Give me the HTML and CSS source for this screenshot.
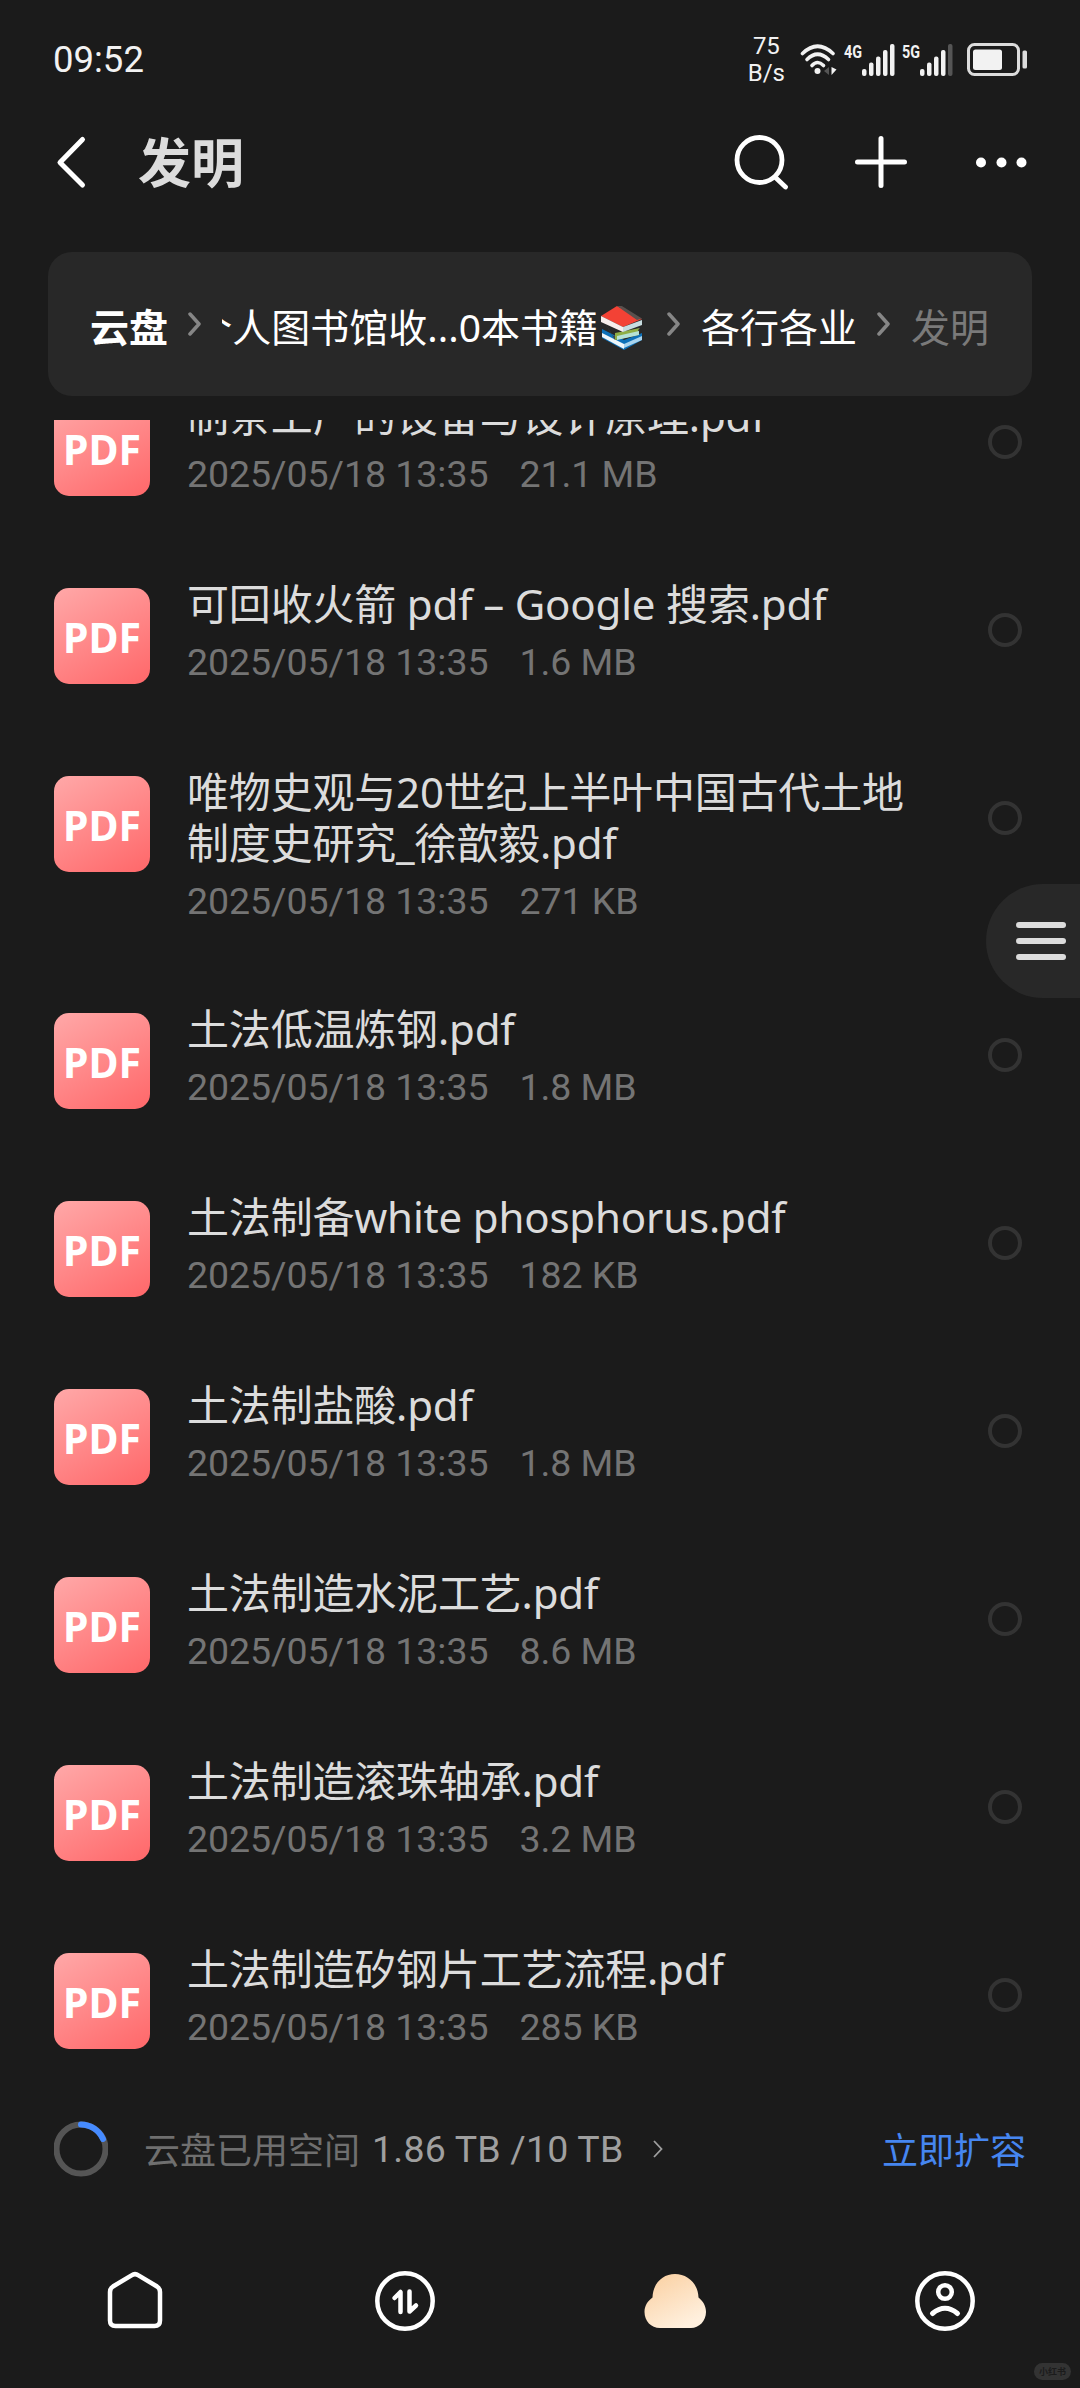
FILE: index.html
```html
<!DOCTYPE html>
<html lang="zh-CN">
<head>
    <meta charset="UTF-8">
    <title>发明</title>
    <link rel="stylesheet" href="styles.css">
</head>
<body>
    <div class="status-bar">
        <span class="time">09:52</span>
        <div class="status-right">
            <div class="speed">75<br>B/s</div>
            <svg class="wifi" width="39" height="34" viewBox="0 0 39 34" fill="none" stroke="#f2f2f2" stroke-width="3.6" stroke-linecap="round">
                <path d="M2.5 10.5 Q17.5 -4 33 10.5"/>
                <path d="M7 16.5 Q17.5 6 28.5 16.5"/>
                <path d="M12 22.5 Q17.5 16.5 23.5 22.5"/>
                <circle cx="17.5" cy="28" r="3" fill="#f2f2f2" stroke="none"/>
                <path d="M29 24v8l-5-4z" fill="#555" stroke="none"/>
                <path d="M31.5 24v8l5-5.5z" fill="#f2f2f2" stroke="none"/>
            </svg>
            <svg class="net" width="19" height="16" viewBox="0 0 19 16"><text x="0" y="15" textLength="18" lengthAdjust="spacingAndGlyphs">4G</text></svg>
            <svg class="signal" width="34" height="32" viewBox="0 0 34 32" fill="#f2f2f2">
                <rect x="0" y="25" width="4.5" height="7" rx="2"/>
                <rect x="7" y="18.5" width="4.5" height="13.5" rx="2"/>
                <rect x="14" y="12.5" width="4.5" height="19.5" rx="2"/>
                <rect x="21" y="6" width="4.5" height="26" rx="2"/>
                <rect x="28" y="0" width="4.5" height="32" rx="2"/>
            </svg>
            <svg class="net" width="19" height="16" viewBox="0 0 19 16"><text x="0" y="15" textLength="18" lengthAdjust="spacingAndGlyphs">5G</text></svg>
            <svg class="signal" width="34" height="32" viewBox="0 0 34 32" fill="#f2f2f2">
                <rect x="0" y="25" width="4.5" height="7" rx="2"/>
                <rect x="7" y="18.5" width="4.5" height="13.5" rx="2"/>
                <rect x="14" y="12.5" width="4.5" height="19.5" rx="2"/>
                <rect x="21" y="6" width="4.5" height="26" rx="2"/>
                <rect x="28" y="0" width="4.5" height="32" rx="2" fill="#555"/>
            </svg>
            <svg class="battery" width="61" height="34" viewBox="0 0 61 34">
                <rect x="1.5" y="1.5" width="50" height="30" rx="6" fill="none" stroke="#dcdcdc" stroke-width="3"/>
                <rect x="6" y="6.5" width="29" height="20.5" rx="2.5" fill="#f2f2f2"/>
                <rect x="55.5" y="7.5" width="4.5" height="18" rx="1.5" fill="#dcdcdc"/>
            </svg>
        </div>
    </div>

    <header class="header">
        <svg class="back" width="36" height="56" viewBox="0 0 36 56" fill="none" stroke="#fff" stroke-width="5" stroke-linecap="round" stroke-linejoin="round">
            <path d="M29.5 5.5L7 28.5L29.5 51"/>
        </svg>
        <h1 class="title">发明</h1>
        <div class="actions">
            <svg width="56" height="56" viewBox="0 0 56 56" fill="none" stroke="#fff" stroke-width="4.8" stroke-linecap="round">
                <circle cx="26.5" cy="26" r="22.5"/>
                <path d="M43 44L52.5 53"/>
            </svg>
            <svg width="56" height="56" viewBox="0 0 56 56" fill="none" stroke="#fff" stroke-width="5" stroke-linecap="round">
                <path d="M28 4.5v47M4.5 28h47"/>
            </svg>
            <svg width="56" height="56" viewBox="0 0 56 56" fill="#fff">
                <circle cx="8" cy="28.5" r="5"/>
                <circle cx="28.5" cy="28.5" r="5"/>
                <circle cx="48.5" cy="28.5" r="5"/>
            </svg>
        </div>
    </header>

    <nav class="breadcrumb">
        <span class="crumb root">云盘</span>
        <svg class="sep sep-first" width="13" height="24" viewBox="0 0 13 24"><path d="M2 2l9 10l-9 10"/></svg>
        <span class="crumb path"><span class="path-text">个人图书馆收...0本书籍</span></span>
        <svg class="books" width="44" height="44" viewBox="0 0 44 44">
            <path d="M2 23l22 11l18-7v7l-18 10l-22-12z" fill="#0c70b8"/>
            <path d="M2 27l22 11v5l-22-12z" fill="#eef6fa"/>
            <path d="M24 38l18-8v4l-18 8z" fill="#a9d4ee"/>
            <path d="M3 14l10 16l26-8v7l-24 5z" fill="#45483f"/>
            <path d="M15 27l25-5l-2 2v5l-23 5z" fill="#8fae45"/>
            <path d="M17 30l22-5v4l-22 5z" fill="#b5e2d5"/>
            <path d="M17 0l25 13l-19 8l-22-11z" fill="#f34235"/>
            <path d="M17 0l4-.5l21 13l-5 1.5z" fill="#59504d"/>
            <path d="M1 10l22 11v5l-22-10z" fill="#f7eeec"/>
            <path d="M23 21l19-7v5l-19 7z" fill="#c8dce0"/>
        </svg>
        <svg class="sep" width="13" height="24" viewBox="0 0 13 24"><path d="M2 2l9 10l-9 10"/></svg>
        <span class="crumb">各行各业</span>
        <svg class="sep sep-last" width="13" height="24" viewBox="0 0 13 24"><path d="M2 2l9 10l-9 10"/></svg>
        <span class="crumb current">发明</span>
    </nav>

    <main class="list-wrap">
        <ul class="file-list">
            <li class="file">
                <div class="icon">PDF</div>
                <div class="info">
                    <div class="name">制茶工厂的设备与设计原理.pdf</div>
                    <div class="meta"><span>2025/05/18 13:35</span><span>21.1 MB</span></div>
                </div>
                <span class="check"></span>
            </li>
            <li class="file">
                <div class="icon">PDF</div>
                <div class="info">
                    <div class="name">可回收火箭 pdf – Google 搜索.pdf</div>
                    <div class="meta"><span>2025/05/18 13:35</span><span>1.6 MB</span></div>
                </div>
                <span class="check"></span>
            </li>
            <li class="file">
                <div class="icon">PDF</div>
                <div class="info">
                    <div class="name">唯物史观与20世纪上半叶中国古代土地<br>制度史研究_徐歆毅.pdf</div>
                    <div class="meta"><span>2025/05/18 13:35</span><span>271 KB</span></div>
                </div>
                <span class="check"></span>
            </li>
            <li class="file">
                <div class="icon">PDF</div>
                <div class="info">
                    <div class="name">土法低温炼钢.pdf</div>
                    <div class="meta"><span>2025/05/18 13:35</span><span>1.8 MB</span></div>
                </div>
                <span class="check"></span>
            </li>
            <li class="file">
                <div class="icon">PDF</div>
                <div class="info">
                    <div class="name">土法制备white phosphorus.pdf</div>
                    <div class="meta"><span>2025/05/18 13:35</span><span>182 KB</span></div>
                </div>
                <span class="check"></span>
            </li>
            <li class="file">
                <div class="icon">PDF</div>
                <div class="info">
                    <div class="name">土法制盐酸.pdf</div>
                    <div class="meta"><span>2025/05/18 13:35</span><span>1.8 MB</span></div>
                </div>
                <span class="check"></span>
            </li>
            <li class="file">
                <div class="icon">PDF</div>
                <div class="info">
                    <div class="name">土法制造水泥工艺.pdf</div>
                    <div class="meta"><span>2025/05/18 13:35</span><span>8.6 MB</span></div>
                </div>
                <span class="check"></span>
            </li>
            <li class="file">
                <div class="icon">PDF</div>
                <div class="info">
                    <div class="name">土法制造滚珠轴承.pdf</div>
                    <div class="meta"><span>2025/05/18 13:35</span><span>3.2 MB</span></div>
                </div>
                <span class="check"></span>
            </li>
            <li class="file">
                <div class="icon">PDF</div>
                <div class="info">
                    <div class="name">土法制造矽钢片工艺流程.pdf</div>
                    <div class="meta"><span>2025/05/18 13:35</span><span>285 KB</span></div>
                </div>
                <span class="check"></span>
            </li>
        </ul>
    </main>

    <div class="storage">
        <svg class="ring" width="54" height="56" viewBox="0 0 54 56" fill="none" stroke-width="6">
            <circle cx="27" cy="28" r="24.5" stroke="#555"/>
            <path d="M27 3.5A24.5 24.5 0 0 1 49 18" stroke="#468bff" stroke-linecap="round"/>
        </svg>
        <span class="storage-label">云盘已用空间</span>
        <span class="storage-value">1.86 TB /10 TB</span>
        <svg class="storage-arrow" width="10" height="18" viewBox="0 0 10 18" fill="none" stroke="#9f9f9f" stroke-width="1.8"><path d="M1 1l7.5 8l-7.5 8"/></svg>
        <span class="upgrade">立即扩容</span>
    </div>

    <footer class="tabs">
        <div class="tab">
            <svg width="64" height="64" viewBox="0 0 64 64" fill="none" stroke="#fff" stroke-width="4.5">
                <path d="M28.5 6.3Q32 4 35.5 6.3L54 17.5Q57 19.5 57 23V51.5Q57 57 51.5 57H12.5Q7 57 7 51.5V23Q7 19.5 10 17.5Z"/>
            </svg>
        </div>
        <div class="tab">
            <svg width="64" height="64" viewBox="0 0 64 64" fill="none" stroke="#fff" stroke-width="4.5" stroke-linecap="round" stroke-linejoin="round">
                <circle cx="32" cy="32" r="27.7"/>
                <path d="M21.5 29L27.5 23V43M36.5 22.5V42.5L43 36.5"/>
            </svg>
        </div>
        <div class="tab">
            <svg width="64" height="64" viewBox="0 0 64 64">
                <defs>
                    <linearGradient id="cloud" x1="0" y1="0" x2="0.6" y2="1">
                        <stop offset="0.2" stop-color="#fbd5ab"/>
                        <stop offset="1" stop-color="#fff0de"/>
                    </linearGradient>
                </defs>
                <path d="M9.5 28.5C10 14 20 5 32 5S55 14 55.5 28.5C60 32 63 37 63 43C63 52 56 59 48 59H17C8 59 1.5 52 1.5 43C1.5 37 4.5 32 9.5 28.5Z" fill="url(#cloud)"/>
            </svg>
        </div>
        <div class="tab">
            <svg width="64" height="64" viewBox="0 0 64 64" fill="none" stroke="#fff" stroke-width="4.5" stroke-linecap="round">
                <circle cx="32" cy="32" r="27.7"/>
                <circle cx="32" cy="23" r="6.8"/>
                <path d="M19.5 44.5Q32 34 44.5 44.5" stroke-width="5"/>
            </svg>
        </div>
    </footer>

    <div class="menu-btn"><i></i><i></i><i></i></div>
    <div class="watermark">小红书</div>
</body>
</html>
```
FILE: styles.css
```css
* {
    box-sizing: border-box;
}

body {
    margin: 0;
    width: 1080px;
    height: 2388px;
    display: flex;
    flex-direction: column;
    position: relative;
    overflow: hidden;
    background-color: #1b1b1b;
    color: #dcdcdc;
    font-family: "Noto Sans", "Noto Sans CJK SC", sans-serif;
}

svg {
    display: block;
    flex-shrink: 0;
}

/* Status bar */
.status-bar {
    height: 104px;
    padding: 15px 52px 0 53px;
    display: flex;
    justify-content: space-between;
    align-items: center;
    color: #f2f2f2;
    font-family: Roboto, sans-serif;
}

.time {
    font-size: 36.5px;
}

.status-right {
    display: flex;
    align-items: center;
}

.speed {
    font-size: 24px;
    line-height: 27px;
    text-align: center;
    margin-right: 15px;
}

.net {
    align-self: flex-start;
    margin: 10px 2px 0 -1px;
    overflow: visible;
    fill: #f2f2f2;
    font-size: 19px;
    font-weight: bold;
}

.wifi {
    margin-right: 6px;
}

.signal {
    margin-right: 7px;
    margin-left: -3px;
}

.battery {
    margin-left: 6px;
}

/* Title row */
.header {
    height: 148px;
    padding: 0 51px 33px 53px;
    display: flex;
    align-items: center;
}

.title {
    margin: 2px 0 0 49px;
    font-size: 53px;
    line-height: 64px;
    font-weight: bold;
}

.actions {
    display: flex;
    gap: 64px;
    margin-left: auto;
}

/* Path */
.breadcrumb {
    height: 144px;
    margin: 0 48px 24px;
    padding: 5px 43px 0 42px;
    display: flex;
    align-items: center;
    border-radius: 24px;
    background-color: #282828;
}

.crumb {
    color: #fff;
    font-size: 39px;
    line-height: 56px;
    white-space: nowrap;
}

.crumb.root {
    font-weight: bold;
}

.crumb.current {
    color: #7a7a7a;
}

.path {
    width: 382px;
    display: flex;
    justify-content: flex-end;
    overflow: hidden;
}

.sep {
    margin: -5px 21px 0 23px;
    fill: none;
    stroke: #868686;
    stroke-width: 3.5;
    stroke-linecap: round;
    stroke-linejoin: round;
}

.sep-first {
    margin-left: 20px;
}

.sep-last {
    margin-left: 20px;
}

.books {
    margin-top: 3px;
    margin-left: 2px;
}

/* Files */
.list-wrap {
    height: 1670px;
    overflow: hidden;
}

.file-list {
    margin: -71px 0 0;
    padding: 0;
    list-style: none;
}

.file {
    padding: 43px 58px 41px 54px;
    display: flex;
    align-items: flex-start;
}

.icon {
    width: 96px;
    height: 96px;
    margin-top: 8px;
    border-radius: 15px;
    background: linear-gradient(150deg, #ffa5a5 5%, #ff6769 100%);
    color: #fff;
    font-size: 41px;
    line-height: 98px;
    font-weight: bold;
    text-align: center;
}

.info {
    flex: 1;
    margin: -2px 0 0 37px;
}

.name {
    font-size: 42px;
    line-height: 51px;
    letter-spacing: -0.18px;
    white-space: nowrap;
}

.meta {
    display: flex;
    gap: 31px;
    margin-top: 13px;
    color: #747474;
    font-family: Roboto, sans-serif;
    font-size: 37.5px;
    line-height: 40px;
    letter-spacing: -0.05px;
}

.check {
    width: 34px;
    height: 34px;
    margin-top: 33px;
    border: 4px solid #333;
    border-radius: 50%;
}

/* Storage */
.storage {
    height: 118px;
    padding: 0 54px;
    display: flex;
    align-items: center;
    color: #6f6f6f;
    font-size: 36px;
}

.storage-label {
    margin: -2px 0 0 36px;
}

.storage-value {
    margin-left: 12px;
    color: #9f9f9f;
    font-family: Roboto, sans-serif;
    font-size: 37.5px;
    letter-spacing: 0.2px;
}

.storage-arrow {
    margin-left: 30px;
}

.upgrade {
    margin-top: -2px;
    margin-left: auto;
    color: #4686f0;
}

/* Bottom tabs */
.tabs {
    height: 180px;
    padding-top: 61px;
    display: flex;
}

.tab {
    flex: 1;
    display: flex;
    justify-content: center;
}

/* Floating button at the right edge */
.menu-btn {
    position: absolute;
    top: 884px;
    right: 0;
    width: 94px;
    height: 114px;
    padding-left: 30px;
    display: flex;
    flex-direction: column;
    justify-content: center;
    gap: 10px;
    border-radius: 57px 0 0 57px;
    background-color: #282828;
}

.menu-btn i {
    width: 50px;
    height: 6px;
    border-radius: 3px;
    background-color: #dcdcdc;
}

.watermark {
    position: absolute;
    right: 9px;
    bottom: 8px;
    width: 37px;
    height: 17px;
    border-radius: 9px;
    background-color: #333;
    color: #1b1b1b;
    font-size: 9px;
    line-height: 17px;
    font-weight: bold;
    text-align: center;
}
```
